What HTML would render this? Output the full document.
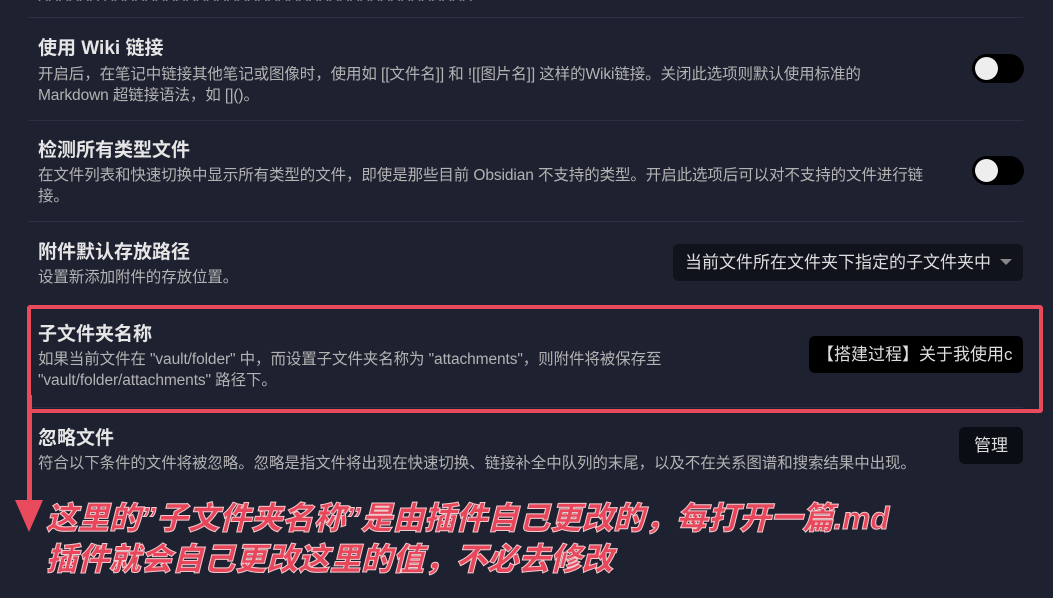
<!DOCTYPE html><html><head><meta charset="utf-8"><style>
body{margin:0;width:1053px;height:598px;background:#1d2130;overflow:hidden;position:relative;font-family:"Liberation Sans","Noto Sans CJK SC",sans-serif;color:#dadada}
.a{position:absolute;white-space:nowrap}
.t{font-size:19px;font-weight:bold;color:#e6e6e6}
.d{font-size:15.5px;color:#b3b3b3;line-height:21px;letter-spacing:-0.1px}
.hr{position:absolute;left:28px;width:995px;height:1px;background:#2c3040}
.tg{position:absolute;left:972px;width:52px;height:29px;border-radius:15px;background:#000}
.tg:after{content:"";position:absolute;left:3px;top:3px;width:23px;height:23px;border-radius:50%;background:#eee}
.btn{position:absolute;background:#0b0d14;border-radius:6px;color:#ddd;font-size:17px;white-space:nowrap}
.big{position:absolute;left:46px;font-size:31.5px;font-weight:900;font-style:italic;color:#e8475b;-webkit-text-stroke:1px #f2c9cd;white-space:nowrap}
</style></head><body>
<div class="a d" style="left:38px;top:-14px;color:#888">XXXXXX XXXXXXXXXXXXXXXXXXXXXXXXXXXXXXXXXXXX</div>
<div class="hr" style="top:17px"></div>
<div class="a t" style="left:38px;top:33px">使用 Wiki 链接</div>
<div class="a d" style="left:38px;top:64px">开启后，在笔记中链接其他笔记或图像时，使用如 [[文件名]] 和 ![[图片名]] 这样的Wiki链接。关闭此选项则默认使用标准的<br>Markdown 超链接语法，如 []()。</div>
<div class="tg" style="top:54px"></div>
<div class="hr" style="top:120px"></div>
<div class="a t" style="left:38px;top:135px">检测所有类型文件</div>
<div class="a d" style="left:38px;top:165px">在文件列表和快速切换中显示所有类型的文件，即使是那些目前 Obsidian 不支持的类型。开启此选项后可以对不支持的文件进行链<br>接。</div>
<div class="tg" style="top:156px"></div>
<div class="hr" style="top:221px"></div>
<div class="a t" style="left:38px;top:237px">附件默认存放路径</div>
<div class="a d" style="left:38px;top:267px">设置新添加附件的存放位置。</div>
<div class="btn" style="left:673px;top:244px;width:350px;height:37px;line-height:37px;background:#10131c"><span style="margin-left:12px">当前文件所在文件夹下指定的子文件夹中</span><span style="position:absolute;right:11px;top:15px;border-left:6px solid transparent;border-right:6px solid transparent;border-top:6px solid #888"></span></div>
<div class="a t" style="left:38px;top:319px">子文件夹名称</div>
<div class="a d" style="left:38px;top:349px">如果当前文件在 "vault/folder" 中，而设置子文件夹名称为 "attachments"，则附件将被保存至<br>"vault/folder/attachments" 路径下。</div>
<div class="btn" style="left:809px;top:336px;width:214px;height:37px;line-height:37px;background:#000;overflow:hidden"><span style="margin-left:8px">【搭建过程】关于我使用c</span></div>
<div class="hr" style="top:407px"></div>
<div class="a" style="left:27px;top:305px;width:1008px;height:100px;border:4px solid #e94b5d;border-radius:3px"></div>
<div class="a t" style="left:38px;top:423px">忽略文件</div>
<div class="a d" style="left:38px;top:453px">符合以下条件的文件将被忽略。忽略是指文件将出现在快速切换、链接补全中队列的末尾，以及不在关系图谱和搜索结果中出现。</div>
<div class="btn" style="left:959px;top:427px;width:64px;height:37px;line-height:37px;text-align:center">管理</div>
<div class="a" style="left:27px;top:395px;width:5px;height:110px;background:#e94b5d"></div>
<div class="a" style="left:15px;top:500px;border-left:14px solid transparent;border-right:14px solid transparent;border-top:32px solid #e94b5d"></div>
<div class="big" style="top:493px">这里的”子文件夹名称”是由插件自己更改的，每打开一篇.md</div>
<div class="big" style="top:534px">插件就会自己更改这里的值，不必去修改</div>
</body></html>
